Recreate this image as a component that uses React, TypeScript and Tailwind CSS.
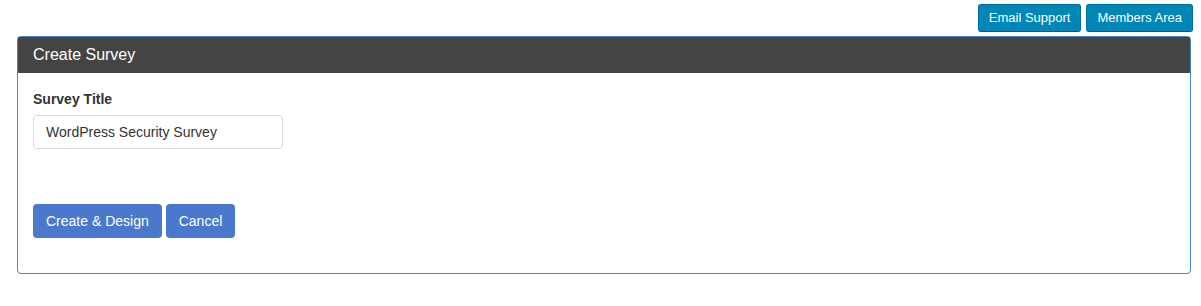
export default function App() {
  return (
    <div className="min-h-[306px] bg-white font-['Liberation_Sans',Arial,sans-serif] text-[14px] text-[#333]">
      <div className="flex justify-end gap-[5px] pt-1 pr-2">
        <button className="h-[28px] rounded-[3px] border border-[#00719c] border-b-[#005f83] bg-[#0087b8] px-[10px] text-[13px] text-white">
          Email Support
        </button>
        <button className="h-[28px] rounded-[3px] border border-[#00719c] border-b-[#005f83] bg-[#0087b8] px-[10px] text-[13px] text-white">
          Members Area
        </button>
      </div>
      <div className="ml-[17px] mr-[10px] mt-1 rounded-[4px] border border-[#4a87c7]">
        <div className="flex h-9 items-center bg-[#444444] px-[15px] text-[16px] text-white">
          Create Survey
        </div>
        <div className="px-[15px] pt-[16px] pb-[35px]">
          <label className="mb-[6px] block font-bold leading-5">Survey Title</label>
          <input
            className="h-[34px] w-[250px] rounded-[4px] border border-[#dcdcdc] px-3 text-[14px] text-[#333] outline-none"
            defaultValue="WordPress Security Survey"
          />
          <div className="mt-[55px] flex gap-1">
            <button className="h-[34px] rounded-[4px] bg-[#4a78cc] px-[13px] text-white">
              Create &amp; Design
            </button>
            <button className="h-[34px] rounded-[4px] bg-[#4a78cc] px-[13px] text-white">
              Cancel
            </button>
          </div>
        </div>
      </div>
    </div>
  );
}
